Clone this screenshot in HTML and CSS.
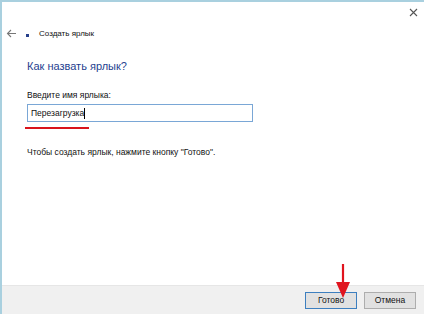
FILE: index.html
```html
<!DOCTYPE html>
<html lang="ru">
<head>
    <meta charset="UTF-8">
    <title>Создать ярлык</title>
    <link rel="stylesheet" href="styles.css">
</head>
<body>
    <div class="window">
        <div class="titlebar">
            <svg class="close" width="9" height="9" viewBox="0 0 9 9">
                <path d="M1 1 L8 8 M8 1 L1 8" stroke="#555" stroke-width="1.1"/>
            </svg>
        </div>
        <div class="nav">
            <svg class="back" width="10" height="9" viewBox="0 0 10 9">
                <path d="M10 4.5 H1.5 M5 1 L1.5 4.5 L5 8" stroke="#777" stroke-width="1.1" fill="none"/>
            </svg>
            <span class="nav-icon"></span>
            <span class="nav-title">Создать ярлык</span>
        </div>
        <div class="content">
            <h1 class="heading">Как назвать ярлык?</h1>
            <div class="label">Введите имя ярлыка:</div>
            <div class="input">Перезагрузка<span class="caret"></span></div>
            <div class="mark"></div>
            <p class="hint">Чтобы создать ярлык, нажмите кнопку "Готово".</p>
        </div>
        <div class="footer">
            <button class="btn btn-default">Готово</button>
            <button class="btn">Отмена</button>
        </div>
        <svg class="pointer" width="16" height="36" viewBox="0 0 16 36">
            <path d="M8 0 V20" stroke="#e0141e" stroke-width="2.2"/>
            <path d="M1 18 L15 18 L8 34 Z" fill="#e0141e"/>
        </svg>
    </div>
</body>
</html>
```

FILE: styles.css
```css
* {
    box-sizing: border-box;
}
body {
    margin: 0;
    font-family: "Liberation Sans", Arial, sans-serif;
    background: #fff;
}
.window {
    position: relative;
    width: 424px;
    height: 314px;
    border-top: 2px solid #a9d0df;
    border-left: 2px solid #a9d0df;
    display: flex;
    flex-direction: column;
    background: #fff;
}
.titlebar {
    height: 20px;
    display: flex;
    justify-content: flex-end;
    align-items: center;
    padding-right: 6px;
}
.nav {
    height: 22px;
    display: flex;
    align-items: center;
    padding-left: 4px;
}
.back {
    margin-right: 10px;
}
.nav-icon {
    width: 3px;
    height: 3px;
    margin-top: 4px;
    background: #27408b;
    margin-right: 10px;
}
.nav-title {
    font-size: 8px;
    color: #111;
}
.content {
    flex: 1;
    padding-left: 25px;
}
.heading {
    margin: 15px 0 0;
    font-size: 11px;
    font-weight: normal;
    color: #1f3f8f;
    line-height: 14px;
}
.label {
    margin-top: 17px;
    font-size: 8.5px;
    color: #111;
    line-height: 10px;
}
.input {
    margin-top: 4px;
    width: 226px;
    height: 18px;
    border: 1px solid #7aa7d6;
    font-size: 8.5px;
    line-height: 16px;
    padding-left: 3px;
    color: #111;
    display: flex;
    align-items: center;
}
.caret {
    width: 1px;
    height: 11px;
    background: #000;
}
.mark {
    margin-top: 5px;
    margin-left: -2px;
    width: 64px;
    height: 2px;
    background: #d9141c;
}
.hint {
    margin: 18px 0 0;
    font-size: 8.5px;
    color: #111;
    line-height: 10px;
}
.footer {
    height: 29px;
    background: #f0f0f0;
    border-top: 1px solid #e6e6e6;
    display: flex;
    justify-content: flex-end;
    align-items: center;
    gap: 7px;
    padding-right: 8px;
}
.btn {
    width: 52px;
    height: 17px;
    border: 1px solid #adadad;
    background: #e1e1e1;
    font-family: "Liberation Sans", Arial, sans-serif;
    font-size: 8.5px;
    color: #111;
    padding: 0;
}
.btn-default {
    border-color: #3d7fbf;
}
.pointer {
    position: absolute;
    left: 333px;
    top: 262px;
}
```
